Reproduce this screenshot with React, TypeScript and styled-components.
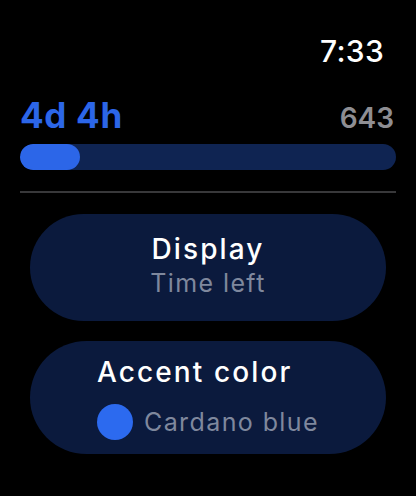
import styled, { createGlobalStyle } from "styled-components";

const GlobalStyle = createGlobalStyle`
    html, body {
        margin: 0;
        padding: 0;
        background: #000;
    }
    body {
        font-family: Inter, "Noto Sans", "Liberation Sans", sans-serif;
        color: #fff;
        -webkit-font-smoothing: antialiased;
    }
`;

const Screen = styled.div`
    width: 416px;
    height: 496px;
    background: #000;
    overflow: hidden;
    display: flex;
    flex-direction: column;
    padding: 0 20px;
    box-sizing: border-box;
`;

const Clock = styled.div`
    align-self: flex-end;
    margin-top: 36px;
    margin-right: 12px;
    font-size: 30px;
    line-height: 30px;
    font-weight: 500;
    letter-spacing: 0.3px;
`;

const StatsRow = styled.div`
    display: flex;
    justify-content: space-between;
    align-items: baseline;
    margin-top: 31px;
    padding-right: 2px;
`;

const TimeLeft = styled.div`
    font-size: 35px;
    line-height: 36px;
    font-weight: 700;
    color: #2c66e8;
    letter-spacing: 0.7px;
`;

const Count = styled.div`
    font-size: 28px;
    line-height: 31px;
    font-weight: 600;
    color: #8e8e93;
`;

const Track = styled.div`
    margin-top: 10px;
    height: 26px;
    border-radius: 13px;
    background: #0f2452;
    overflow: hidden;
`;

const Fill = styled.div`
    height: 100%;
    border-radius: 13px;
    background: #2c66e8;
`;

const Divider = styled.div`
    margin-top: 21px;
    height: 2px;
    background: #38383a;
`;

const Card = styled.div<{ $height: number; $gap: number; $lift?: number }>`
    margin: ${(p) => p.$gap}px 10px 0;
    height: ${(p) => p.$height}px;
    padding-bottom: ${(p) => p.$lift ?? 0}px;
    box-sizing: border-box;
    border-radius: 60px;
    background: #0b1a3d;
    display: flex;
    flex-direction: column;
    align-items: center;
    justify-content: center;
`;

const CardBlock = styled.div<{ $align: string }>`
    display: flex;
    flex-direction: column;
    align-items: ${(p) => p.$align};
`;

const Title = styled.div`
    font-size: 28px;
    line-height: 34px;
    font-weight: 500;
    color: #fff;
    letter-spacing: 2.1px;
`;

const Subtitle = styled.div`
    font-size: 25px;
    line-height: 30px;
    font-weight: 400;
    color: #7f889d;
    letter-spacing: 1.4px;
    margin-top: 2px;
`;

const SwatchRow = styled.div`
    display: flex;
    align-items: center;
    gap: 11px;
    margin-top: 15px;

    ${Subtitle} {
        margin-top: 0;
    }
`;

const Swatch = styled.div<{ $color: string }>`
    width: 36px;
    height: 36px;
    border-radius: 50%;
    background: ${(p) => p.$color};
`;

export default function App() {
    const progress = 0.16;
    return (
        <>
            <GlobalStyle />
            <Screen>
                <Clock>7:33</Clock>
                <StatsRow>
                    <TimeLeft>4d 4h</TimeLeft>
                    <Count>643</Count>
                </StatsRow>
                <Track>
                    <Fill style={{ width: `${progress * 100}%` }} />
                </Track>
                <Divider />
                <Card $height={107} $gap={21} $lift={5}>
                    <CardBlock $align="center">
                        <Title>Display</Title>
                        <Subtitle>Time left</Subtitle>
                    </CardBlock>
                </Card>
                <Card $height={113} $gap={20}>
                    <CardBlock $align="flex-start">
                        <Title>Accent color</Title>
                        <SwatchRow>
                            <Swatch $color="#2c6aef" />
                            <Subtitle>Cardano blue</Subtitle>
                        </SwatchRow>
                    </CardBlock>
                </Card>
            </Screen>
        </>
    );
}
